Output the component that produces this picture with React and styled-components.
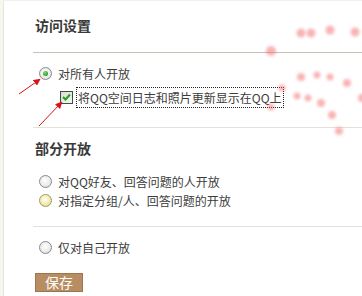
import React from 'react';
import styled, { createGlobalStyle } from 'styled-components';

const GlobalStyle = createGlobalStyle`
  html, body {
    margin: 0;
    padding: 0;
    background: #fff;
  }
  body {
    font-family: "Noto Sans CJK SC", "Liberation Sans", sans-serif;
    font-size: 12px;
    color: #3c3c3c;
  }
`;

const Page = styled.div`
  position: relative;
  width: 362px;
  height: 296px;
  box-sizing: border-box;
  overflow: hidden;
  border-left: 3px solid #f8f7ef;
  border-top: 1px solid #f3f2ea;
`;

const Panel = styled.div`
  display: flex;
  flex-direction: column;
  height: 100%;
  box-sizing: border-box;
  padding: 14px 0 0 29px;
  border-left: 1px solid #e7e4d8;
`;

const Heading = styled.h2`
  margin: ${(p) => p.$top}px 0 0 2px;
  height: 20px;
  line-height: 20px;
  font-size: 14px;
  font-weight: bold;
  color: #3a3a3a;
`;

const Rule = styled.div`
  margin-top: ${(p) => p.$top}px;
  height: 1px;
  background: ${(p) => (p.$strong ? '#c9c0b6' : '#e4e0da')};
`;

const Row = styled.label`
  display: flex;
  align-items: center;
  gap: ${(p) => (p.$check ? 4 : 6)}px;
  height: ${(p) => p.$h || 19}px;
  margin-top: ${(p) => p.$top || 0}px;
  margin-left: ${(p) => (p.$check ? 27 : 6)}px;
  font-size: 12px;
  color: #3c3c3c;
  white-space: nowrap;
`;

const Radio = styled.span`
  position: relative;
  flex: none;
  width: 11px;
  height: 11px;
  border-radius: 50%;
  border: 1px solid ${(p) => (p.$hover ? '#9d9b66' : '#7f8c99')};
  background: ${(p) =>
    p.$hover
      ? 'radial-gradient(circle at 45% 40%, #fffef2 0%, #f7f0c0 40%, #e2d27a 100%)'
      : 'radial-gradient(circle at 45% 40%, #ffffff 0%, #eceae2 60%, #d0cec6 100%)'};

  &::after {
    content: '';
    display: ${(p) => (p.$checked ? 'block' : 'none')};
    position: absolute;
    left: 3px;
    top: 3px;
    width: 5px;
    height: 5px;
    border-radius: 50%;
    background: radial-gradient(circle at 40% 35%, #7ee07e 0%, #2c9a2c 70%);
  }
`;

const Check = styled.span`
  display: flex;
  align-items: center;
  justify-content: center;
  flex: none;
  width: 11px;
  height: 11px;
  border: 1px solid #3d4f44;
  background: linear-gradient(135deg, #dcdcd2 0%, #f6f6f0 100%);
`;

const FocusText = styled.span`
  padding: 1px 1px;
  outline: 1px dotted #222;
`;

const SaveButton = styled.button`
  margin: 16px 0 0 2px;
  width: 48px;
  height: 19px;
  padding: 0;
  border: 1px solid #9a7550;
  background: #b88d62;
  color: #fff;
  font-family: "Noto Sans CJK SC", "Liberation Sans", sans-serif;
  font-size: 14px;
  line-height: 17px;
`;

const Overlay = styled.svg`
  position: absolute;
  left: 0;
  top: 0;
  pointer-events: none;
`;

const dots = [
  [298, 32, 4.5], [308, 32, 4.5], [327, 29, 4.5], [352, 31, 4.5], [268, 50, 5],
  [298, 76, 4], [314, 74, 3.5], [327, 76, 3.5], [344, 82, 4], [279, 87, 3.5],
  [294, 95, 3.5], [305, 97, 3.5], [318, 102, 4], [359, 97, 4], [329, 114, 4],
  [268, 106, 3.5], [336, 130, 4],
];

function Marks() {
  return (
    <Overlay width="362" height="296" viewBox="0 0 362 296">
      <defs>
        <filter id="soft" x="-1" y="-1" width="3" height="3">
          <feGaussianBlur stdDeviation="1.6" />
        </filter>
        <marker id="head" markerWidth="7" markerHeight="7" refX="5" refY="3.5" orient="auto" markerUnits="userSpaceOnUse">
          <path d="M0,0 L7,3.5 L0,7 Z" fill="#d8141a" />
        </marker>
      </defs>
      {dots.map(([x, y, r]) => (
        <circle key={`${x}-${y}`} cx={x} cy={y} r={r} fill="#f26a6a" opacity="0.5" filter="url(#soft)" />
      ))}
      <line x1="16" y1="93" x2="36" y2="79" stroke="#d8141a" strokeWidth="1" markerEnd="url(#head)" />
      <line x1="36" y1="125" x2="58" y2="102" stroke="#d8141a" strokeWidth="1" markerEnd="url(#head)" />
    </Overlay>
  );
}

export default function App() {
  return (
    <>
      <GlobalStyle />
      <Page>
        <Panel>
          <Heading $top={0}>访问设置</Heading>
          <Rule $top={17} $strong />
          <Row $top={11} $h={18}>
            <Radio $checked />
            对所有人开放
          </Row>
          <Row $top={6} $h={18} $check>
            <Check>
              <svg width="9" height="8" viewBox="0 0 9 8">
                <path d="M1 4 L3.5 6.5 L8 1.5" fill="none" stroke="#21a121" strokeWidth="2" />
              </svg>
            </Check>
            <FocusText>将QQ空间日志和照片更新显示在QQ上</FocusText>
          </Row>
          <Rule $top={21} />
          <Heading $top={10}>部分开放</Heading>
          <Row $top={14}>
            <Radio />
            对QQ好友、回答问题的人开放
          </Row>
          <Row>
            <Radio $hover />
            对指定分组/人、回答问题的开放
          </Row>
          <Rule $top={16} />
          <Row $top={11}>
            <Radio />
            仅对自己开放
          </Row>
          <div>
            <SaveButton>保存</SaveButton>
          </div>
        </Panel>
        <Marks />
      </Page>
    </>
  );
}
